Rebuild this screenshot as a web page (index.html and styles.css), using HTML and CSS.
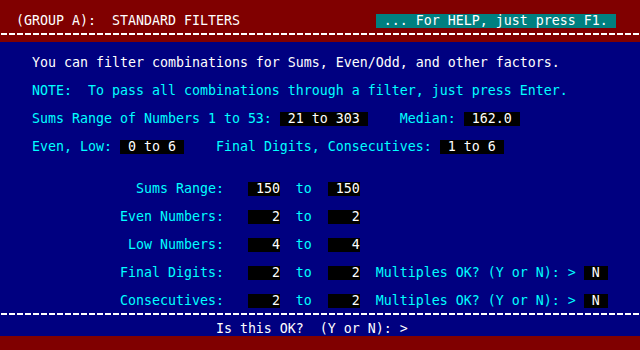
FILE: index.html
```html
<!DOCTYPE html>
<html lang="en">
<head>
  <meta charset="UTF-8" />
  <title>Standard Filters</title>
  <link rel="stylesheet" href="styles.css">
</head>
<body>
  <div class="screen">
    <header class="top">
      <div class="row"></div>
      <div class="row">  (GROUP A):  STANDARD FILTERS                 <span class="help"> ... For HELP, just press F1. </span></div>
      <div class="row rule"></div>
    </header>

    <main class="panel">
      <div class="row"></div>
      <div class="row">    You can filter combinations for Sums, Even/Odd, and other factors.</div>
      <div class="row"></div>
      <div class="row cy">    NOTE:  To pass all combinations through a filter, just press Enter.</div>
      <div class="row"></div>
      <div class="row cy">    Sums Range of Numbers 1 to 53: <span class="fld"> 21 to 303 </span>    Median: <span class="fld"> 162.0 </span></div>
      <div class="row"></div>
      <div class="row cy">    Even, Low: <span class="fld"> 0 to 6 </span>    Final Digits, Consecutives: <span class="fld"> 1 to 6 </span></div>
      <div class="row"></div>
      <div class="row"></div>
      <div class="row cy">                 Sums Range:   <span class="fld"> 150</span>  to  <span class="fld"> 150</span></div>
      <div class="row"></div>
      <div class="row cy">               Even Numbers:   <span class="fld">   2</span>  to  <span class="fld">   2</span></div>
      <div class="row"></div>
      <div class="row cy">                Low Numbers:   <span class="fld">   4</span>  to  <span class="fld">   4</span></div>
      <div class="row"></div>
      <div class="row cy">               Final Digits:   <span class="fld">   2</span>  to  <span class="fld">   2</span>  Multiples OK? (Y or N): > <span class="fld"> N </span></div>
      <div class="row"></div>
      <div class="row cy">               Consecutives:   <span class="fld">   2</span>  to  <span class="fld">   2</span>  Multiples OK? (Y or N): > <span class="fld"> N </span></div>
      <div class="row rule"></div>
      <div class="row">                           Is this OK?  (Y or N): ></div>
    </main>

    <footer class="bottom">
      <div class="row"></div>
    </footer>
  </div>
</body>
</html>
```

FILE: styles.css
```css
:root {
  --red: #800000;
  --blue: #000080;
  --teal: #008080;
  --cyan: #00ffff;
  --white: #ffffff;
}

body {
  margin: 0;
  background: var(--blue);
}

.screen {
  width: 640px;
  height: 350px;
  font-family: "DejaVu Sans Mono", monospace;
  font-size: 13.29px;
  color: var(--white);
}

.top,
.bottom {
  background: var(--red);
}

.panel {
  background: var(--blue);
}

.row {
  height: 14px;
  line-height: 14px;
  white-space: pre;
  overflow: hidden;
}

.cy {
  color: var(--cyan);
}

/* dashed separator lines, one "-" per 8px cell */
.rule {
  background-image: repeating-linear-gradient(90deg, transparent 0 1px, var(--white) 1px 7px, transparent 7px 8px);
  background-size: 100% 2px;
  background-position: 0 5px;
  background-repeat: no-repeat;
}

.help {
  background: var(--teal);
  color: var(--white);
  display: inline-block;
  height: 14px;
}

.fld {
  background: #000;
  color: var(--white);
  display: inline-block;
  height: 14px;
}
```
